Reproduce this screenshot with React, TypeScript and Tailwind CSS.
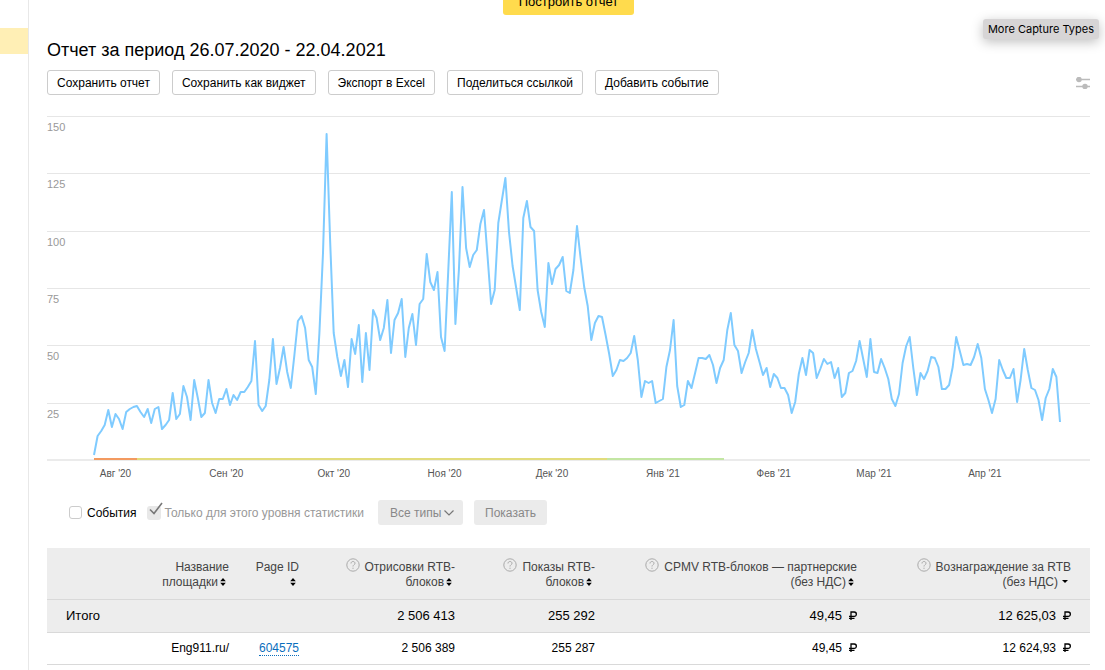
import React, { useState } from 'react';

// Daily values, in chart units above the baseline (CHART_HEIGHT = 150 on the axis)
const CHART_WIDTH = 1043;
const CHART_HEIGHT = 344;
const FIRST_DAY_X = 47;
const LAST_DAY_X = 1013;

const DAYS = [
    5, 24, 29, 35, 50, 33, 46, 41, 31, 48, 51, 53, 54, 48, 43, 51, 37, 51, 53, 31,
    35, 40, 67, 41, 46, 74, 63, 40, 80, 62, 43, 47, 80, 57, 47, 61, 61, 71, 55, 65,
    60, 68, 68, 73, 79, 119, 55, 49, 54, 80, 121, 76, 92, 113, 88, 72, 105, 139, 144, 132,
    100, 93, 66, 127, 207, 326, 220, 127, 103, 84, 100, 73, 121, 106, 135, 78, 127, 90, 150, 142,
    120, 132, 160, 107, 140, 147, 161, 103, 132, 146, 115, 156, 161, 206, 178, 170, 188, 123, 109, 188,
    268, 136, 190, 273, 212, 193, 205, 210, 236, 250, 203, 156, 170, 237, 260, 282, 228, 194, 172, 150,
    242, 259, 233, 229, 170, 148, 133, 197, 176, 191, 195, 203, 169, 167, 190, 234, 202, 173, 154, 120,
    137, 144, 143, 125, 106, 84, 90, 100, 99, 102, 107, 124, 100, 63, 79, 77, 79, 57, 59, 61,
    93, 110, 140, 74, 53, 55, 79, 72, 87, 102, 102, 101, 105, 95, 77, 92, 100, 130, 147, 115,
    109, 87, 98, 107, 130, 111, 98, 85, 92, 73, 86, 82, 72, 72, 65, 47, 58, 86, 102, 85,
    110, 107, 82, 91, 101, 96, 98, 82, 92, 63, 67, 87, 89, 99, 119, 101, 83, 121, 88, 87,
    101, 92, 81, 61, 54, 66, 97, 114, 123, 92, 65, 87, 81, 89, 103, 102, 93, 71, 71, 75,
    93, 123, 109, 95, 96, 95, 103, 116, 102, 71, 60, 47, 61, 100, 90, 82, 82, 91, 58, 80,
    111, 90, 72, 70, 60, 40, 62, 71, 91, 83, 38,
];

const MONTHS = [
    { label: "Авг '20", day: 6 },
    { label: "Сен '20", day: 37 },
    { label: "Окт '20", day: 67 },
    { label: "Ноя '20", day: 98 },
    { label: "Дек '20", day: 128 },
    { label: "Янв '21", day: 159 },
    { label: "Фев '21", day: 190 },
    { label: "Мар '21", day: 218 },
    { label: "Апр '21", day: 249 },
];

const AXIS = [150, 125, 100, 75, 50, 25];
const ACTIONS = ['Сохранить отчет', 'Сохранить как виджет', 'Экспорт в Excel', 'Поделиться ссылкой', 'Добавить событие'];

const COLUMNS = [
    { lines: ['Название', 'площадки'], help: false, sorted: false },
    { lines: ['Page ID', ''], help: false, sorted: false },
    { lines: ['Отрисовки RTB-', 'блоков'], help: true, sorted: false },
    { lines: ['Показы RTB-', 'блоков'], help: true, sorted: false },
    { lines: ['CPMV RTB-блоков — партнерские', '(без НДС)'], help: true, sorted: false },
    { lines: ['Вознаграждение за RTB', '(без НДС)'], help: true, sorted: true },
];

const dayX = (day: number) => FIRST_DAY_X + (day * (LAST_DAY_X - FIRST_DAY_X)) / (DAYS.length - 1);

function SortIcon({ sorted }: { sorted: boolean }) {
    return sorted ? (
        <svg viewBox="0 0 6 8" className="mr-[3px] ml-1 inline-block h-2 w-[6px] align-baseline" aria-hidden="true">
            <path d="M0 2h6L3 5z" fill="#000" />
        </svg>
    ) : (
        <svg viewBox="0 0 6 8" className="mr-[3px] ml-0.5 inline-block h-2 w-[6px] align-baseline" aria-hidden="true">
            <path d="M.2 3.300h5.600L3 0zM.2 4.700h5.600L3 8z" fill="#000" />
        </svg>
    );
}

function HelpIcon() {
    return (
        <svg viewBox="0 0 14 14" className="-mt-1 mr-[5px] -mb-px inline-block size-[14px] align-baseline" fill="none" stroke="#aaa" aria-hidden="true">
            <circle cx="7" cy="7" r="6.200" />
            <path d="M5 5.500C5 4.200 5.900 3.500 7 3.500s2 .7 2 1.800C9 6.700 7 6.800 7 8.500M7 9.700v1.200" />
        </svg>
    );
}

function Ruble() {
    return (
        <svg viewBox="0 0 8 9" className="ml-[7px] inline-block h-[9px] w-2 align-baseline" fill="none" stroke="#000" strokeWidth="1.300" role="img" aria-label="₽">
            <path d="M2 9V1h3.200a2.100 2.100 0 0 1 0 4.300H0M0 7.300h5.500" />
        </svg>
    );
}

function Chart() {
    const points = DAYS.map((value, day) => `${dayX(day).toFixed(1)},${CHART_HEIGHT - value}`).join(' ');

    return (
        <div className="mt-[21px]">
            <div className="relative grid h-[344px] grid-rows-6 text-[11px] leading-5 text-[#999]">
                {AXIS.map((value) => (
                    <div key={value} className="border-t border-[#e6e6e6]">{value}</div>
                ))}
                <svg
                    viewBox={`0 0 ${CHART_WIDTH} ${CHART_HEIGHT}`}
                    preserveAspectRatio="none"
                    className="absolute inset-0 h-full w-full overflow-visible"
                    fill="none"
                    strokeWidth="2"
                >
                    <path d="M0 344H1043" stroke="#ebebeb" vectorEffect="non-scaling-stroke" />
                    <path d="M47 343H90" stroke="#f39a60" vectorEffect="non-scaling-stroke" />
                    <path d="M90 343H560" stroke="#e2dc7c" vectorEffect="non-scaling-stroke" />
                    <path d="M560 343H677" stroke="#c3e6a3" vectorEffect="non-scaling-stroke" />
                    <polyline points={points} stroke="#7fcbff" strokeLinejoin="round" vectorEffect="non-scaling-stroke" />
                </svg>
            </div>
            <div className="relative h-[27px] text-[10px] leading-[27px] text-[#555]">
                {MONTHS.map((month) => (
                    <span
                        key={month.label}
                        className="absolute top-0 -translate-x-1/2 whitespace-nowrap"
                        style={{ left: `${(dayX(month.day) / CHART_WIDTH) * 100}%` }}
                    >
                        {month.label}
                    </span>
                ))}
            </div>
        </div>
    );
}

function EventFilters() {
    const [showEvents, setShowEvents] = useState(false);

    return (
        <div className="mt-[13px] ml-[22px] flex h-[25px] items-center text-[12px]">
            <label className="flex items-center gap-[5px]">
                <input
                    type="checkbox"
                    checked={showEvents}
                    onChange={(e) => setShowEvents(e.target.checked)}
                    className="size-[13px] appearance-none rounded-[3px] border border-[#ccc] bg-white checked:bg-[#ffdb4d]"
                />
                События
            </label>
            <label className="relative ml-[10px] flex items-center gap-1 text-[#999]">
                <input type="checkbox" checked disabled readOnly className="size-[14px] appearance-none rounded-[3px] bg-[#e8e8e8]" />
                <svg viewBox="0 0 16 14" className="absolute -top-0.5 left-0.5 h-[14px] w-4" fill="none" stroke="#777" strokeWidth="1.600" aria-hidden="true">
                    <path d="M1 7.500l4 4L13 1" />
                </svg>
                Только для этого уровня статистики
            </label>
            <div className="relative ml-[14px]">
                <select disabled aria-label="Типы событий" className="h-[25px] w-[85px] appearance-none rounded-[3px] bg-[#ebebeb] pl-3 text-[#888] opacity-100">
                    <option>Все типы</option>
                </select>
                <svg viewBox="0 0 10 6" className="absolute top-[10px] right-[9px] h-[6px] w-[10px]" fill="none" stroke="#777" strokeWidth="1.200" aria-hidden="true">
                    <path d="M.5.500L5 5l4.500-4.500" />
                </svg>
            </div>
            <button disabled className="ml-[11px] h-[25px] rounded-[3px] bg-[#ebebeb] px-[11px] text-[#888]">Показать</button>
        </div>
    );
}

function StatsTable() {
    return (
        <table className="mt-[23px] w-full table-fixed border-collapse text-right text-[12px]">
            <colgroup>
                <col className="w-[201px]" />
                <col className="w-[70px]" />
                <col className="w-[156px]" />
                <col className="w-[140px]" />
                <col className="w-[262px]" />
                <col className="w-[214px]" />
            </colgroup>
            <thead>
                <tr className="h-[51px] border-b border-[#d9d9d9] bg-[#ededed]">
                    {COLUMNS.map((column) => (
                        <th key={column.lines[0]} className="pt-3 pr-[19px] align-top font-normal text-[#444]">
                            <button className="block w-full text-right leading-[15px] whitespace-nowrap">
                                {column.help && <HelpIcon />}
                                {column.lines[0]}
                                <br />
                                {column.lines[1]}
                                <SortIcon sorted={column.sorted} />
                            </button>
                        </th>
                    ))}
                </tr>
            </thead>
            <tbody>
                <tr className="h-[33px] border-b border-[#d9d9d9] bg-[#ededed] text-[13px]">
                    <td className="pl-[19px] text-left">Итого</td>
                    <td />
                    <td className="pr-[19px]">2 506 413</td>
                    <td className="pr-[19px]">255 292</td>
                    <td className="pr-[19px]">49,45<Ruble /></td>
                    <td className="pr-[19px]">12 625,03<Ruble /></td>
                </tr>
                <tr className="h-8 border-b border-[#d9d9d9]">
                    <td className="pr-[19px]">Eng911.ru/</td>
                    <td className="pr-[19px]">
                        <a href="#604575" className="border-b border-dotted border-[#0a6ebd] text-[#0a6ebd]">604575</a>
                    </td>
                    <td className="pr-[19px]">2 506 389</td>
                    <td className="pr-[19px]">255 287</td>
                    <td className="pr-[19px]">49,45<Ruble /></td>
                    <td className="pr-[19px]">12 624,93<Ruble /></td>
                </tr>
            </tbody>
        </table>
    );
}

export default function App() {
    return (
        <div className="relative flex min-h-screen overflow-hidden bg-white font-['Liberation_Sans',Arial,sans-serif] text-black">
            <aside className="w-7 shrink-0 pt-7">
                <div className="h-[26px] bg-[#ffefb5]" />
            </aside>
            <main className="min-w-0 flex-1 border-l border-[#e8e8e8] pr-[15px] pl-[18px]">
                <div className="flex h-[15px] items-end justify-center overflow-hidden">
                    <button className="h-7 w-[131px] rounded-[3px] bg-[#ffdb4d] pt-0.5 text-[13px]">Построить отчет</button>
                </div>

                <h1 className="mt-[23px] text-[18px] leading-6">Отчет за период 26.07.2020 - 22.04.2021</h1>

                <div className="mt-2 flex items-center gap-3">
                    {ACTIONS.map((action) => (
                        <button key={action} className="h-[25px] rounded-[3px] border border-[#ccc] px-[9px] text-[12px]">
                            {action}
                        </button>
                    ))}
                    <button aria-label="Настройки графика" className="ml-auto">
                        <svg viewBox="0 0 14 12" className="h-3 w-[14px]" stroke="#bbb" strokeWidth="1.500" fill="#bbb">
                            <path d="M0 2.500h14M0 9.500h14" />
                            <circle cx="3" cy="2.500" r="2" />
                            <circle cx="9" cy="9.500" r="2" />
                        </svg>
                    </button>
                </div>

                <Chart />
                <EventFilters />
                <StatsTable />
            </main>

            <div role="tooltip" className="absolute top-[19px] right-[6px] rounded-[3px] bg-[#d7d5d6] px-[5px] font-[Inter,sans-serif] text-[11px] leading-5 shadow-[0_3px_12px_rgba(0,0,0,0.25)]">
                More Capture Types
            </div>
        </div>
    );
}
